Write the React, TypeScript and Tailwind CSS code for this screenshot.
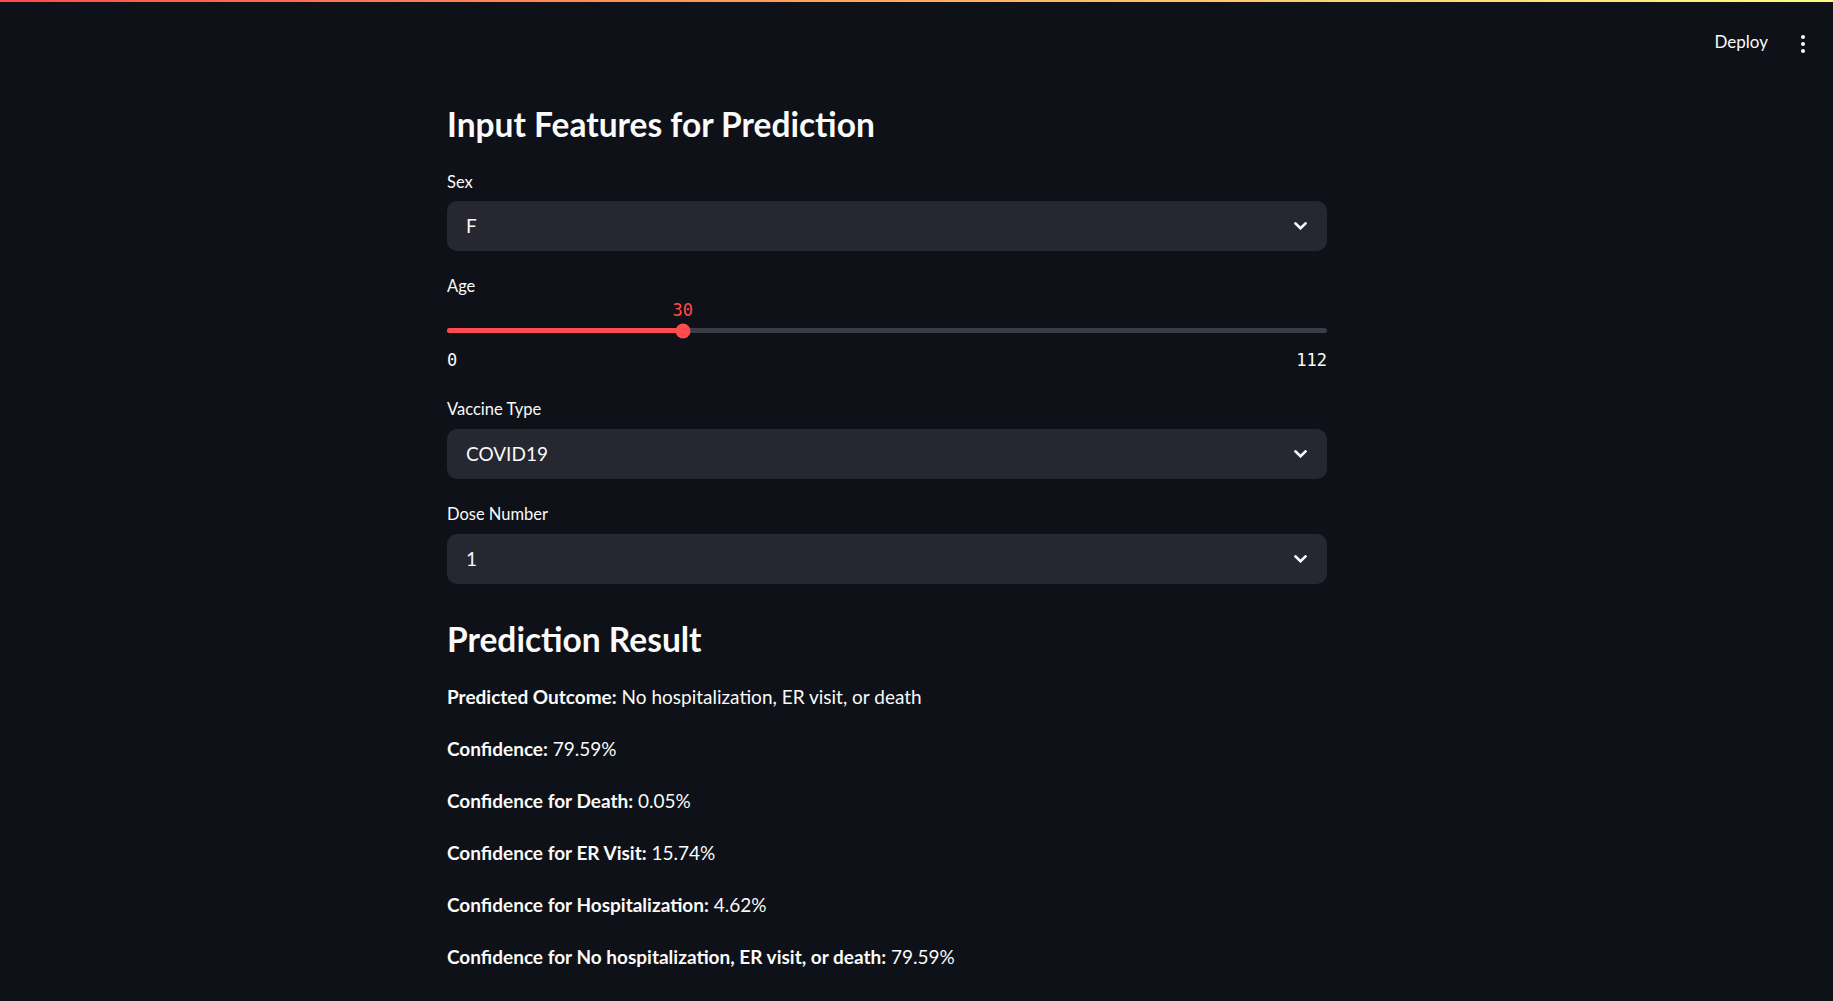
import { useState } from "react";

const AGE_MIN = 0;
const AGE_MAX = 112;

function Chevron() {
  return (
    <svg width="13" height="8" viewBox="0 0 13 8" fill="none" className="shrink-0">
      <path d="M1.5 1.5 L6.5 6.3 L11.5 1.5" stroke="#fafafa" strokeWidth="2.6" strokeLinecap="square" />
    </svg>
  );
}

function SelectBox({ value, className = "mt-[8px]" }: { value: string; className?: string }) {
  return (
    <div
      className={`flex h-[50px] w-full items-center justify-between rounded-[10px] bg-[#262730] pl-[19px] pr-[20px] text-[19px] text-[#fafafa] ${className}`}
    >
      <span>{value}</span>
      <Chevron />
    </div>
  );
}

function Label({ children, className }: { children: React.ReactNode; className: string }) {
  return <div className={`text-[16.5px] leading-[24px] text-[#fafafa] ${className}`}>{children}</div>;
}

function AgeSlider() {
  const [age] = useState(30);
  const pct = ((age - AGE_MIN) / (AGE_MAX - AGE_MIN)) * 100;

  return (
    <div className="font-['DejaVu_Sans_Mono',monospace] text-[17px] leading-[20px]">
      <div className="relative mt-[2px] h-[20px]">
        <span className="absolute top-0 -translate-x-1/2 text-[#ff4b4b]" style={{ left: `${pct}%` }}>
          {age}
        </span>
      </div>
      <div className="relative mt-[8px] h-[5px] rounded-full bg-[#3b3c45]">
        <div className="h-full rounded-full bg-[#ff4b4b]" style={{ width: `${pct}%` }} />
        <div
          className="absolute top-1/2 h-[15px] w-[15px] -translate-x-1/2 -translate-y-1/2 rounded-full bg-[#ff4b4b]"
          style={{ left: `${pct}%` }}
        />
      </div>
      <div className="mt-[17px] flex justify-between text-[#fafafa]">
        <span>{AGE_MIN}</span>
        <span>{AGE_MAX}</span>
      </div>
    </div>
  );
}

const results = [
  ["Predicted Outcome:", "No hospitalization, ER visit, or death"],
  ["Confidence:", "79.59%"],
  ["Confidence for Death:", "0.05%"],
  ["Confidence for ER Visit:", "15.74%"],
  ["Confidence for Hospitalization:", "4.62%"],
  ["Confidence for No hospitalization, ER visit, or death:", "79.59%"],
];

export default function App() {
  return (
    <div className="min-h-screen bg-[#0e1117] font-['Lato',sans-serif] text-[#fafafa]">
      {/* top decoration strip */}
      <div className="h-[2px] bg-gradient-to-r from-[#ff4b4b] to-[#fffd80]" />

      <header className="flex h-[82px] items-start justify-end gap-[33px] pr-[28px] pt-[28px]">
        <span className="text-[17px] leading-[24px]">Deploy</span>
        <svg width="4" height="18" viewBox="0 0 4 18" className="mt-[5px]">
          <circle cx="2" cy="2" r="2" fill="#fafafa" />
          <circle cx="2" cy="9" r="2" fill="#fafafa" />
          <circle cx="2" cy="16" r="2" fill="#fafafa" />
        </svg>
      </header>

      <main className="ml-[447px] w-[880px] pb-[20px]">
        <h2 className="mt-[16px] text-[33.5px] font-bold leading-[48px]">Input Features for Prediction</h2>

        <Label className="mt-[22px]">Sex</Label>
        <SelectBox value="F" className="mt-[7px]" />

        <Label className="mt-[23px]">Age</Label>
        <AgeSlider />

        <Label className="mt-[27px]">Vaccine Type</Label>
        <SelectBox value="COVID19" />

        <Label className="mt-[23px]">Dose Number</Label>
        <SelectBox value="1" />

        <h2 className="mt-[31px] text-[33.5px] font-bold leading-[48px]">Prediction Result</h2>

        <div className="mt-[18px] text-[19px] leading-[32px]">
          {results.map(([k, v]) => (
            <p key={k} className="mb-[20px]">
              <strong className="font-bold">{k}</strong> {v}
            </p>
          ))}
        </div>
      </main>
    </div>
  );
}
